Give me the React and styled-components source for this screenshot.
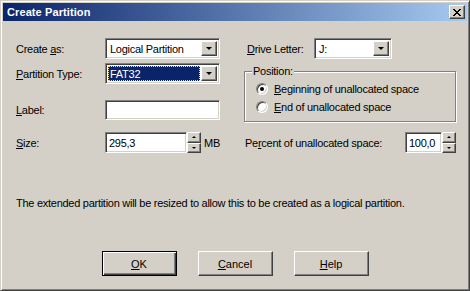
import React from "react";
import styled, { createGlobalStyle, css } from "styled-components";

const GlobalStyle = createGlobalStyle`
  html, body {
    margin: 0;
    padding: 0;
    background: #d4d0c8;
  }
  body {
    font-family: "Liberation Sans", Arial, sans-serif;
    font-size: 11px;
    letter-spacing: -0.27px;
    color: #000;
  }
  * { box-sizing: border-box; }
`;

const raised = css`
  border: 1px solid;
  border-color: #fff #404040 #404040 #fff;
  box-shadow: inset -1px -1px #808080, inset 1px 1px #d4d0c8;
  background: #d4d0c8;
`;

const sunken = css`
  border: 1px solid;
  border-color: #808080 #fff #fff #808080;
  box-shadow: inset 1px 1px #404040, inset -1px -1px #d4d0c8;
`;

const Window = styled.div`
  width: 470px;
  height: 291px;
  background: #d4d0c8;
  border: 1px solid;
  border-color: #d4d0c8 #404040 #404040 #d4d0c8;
  box-shadow: inset 1px 1px #fff, inset -1px -1px #808080;
  padding: 2px;
  display: flex;
  flex-direction: column;
`;

const TitleBar = styled.div`
  height: 18px;
  display: flex;
  align-items: center;
  justify-content: space-between;
  padding: 0 2px;
  background: linear-gradient(to right, #0a246a, #a6caf0);
`;

const Title = styled.span`
  color: #fff;
  font-weight: bold;
  font-size: 11px;
  letter-spacing: 0.1px;
  padding-left: 2px;
`;

const CloseButton = styled.button`
  ${raised};
  width: 16px;
  height: 14px;
  padding: 0;
  display: flex;
  align-items: center;
  justify-content: center;
`;

const Body = styled.div`
  flex: 1;
  padding: 17px 0 0 13px;
  display: flex;
  flex-direction: column;
`;

const Columns = styled.div`
  display: grid;
  grid-template-columns: 228px 212px;
  align-items: start;
`;

const Column = styled.div`
  display: flex;
  flex-direction: column;
`;

const Row = styled.div`
  display: flex;
  align-items: center;
  height: ${p => p.h || 21}px;
  margin-top: ${p => p.mt || 0}px;
  padding-left: ${p => p.pl || 0}px;
`;

const FieldLabel = styled.span`
  width: ${p => p.w}px;
  flex-shrink: 0;
  white-space: nowrap;
`;

const Combo = styled.div`
  ${sunken};
  width: ${p => p.w}px;
  height: 21px;
  background: #fff;
  display: flex;
  align-items: stretch;
  padding: 2px;
`;

const ComboValue = styled.div`
  flex: 1;
  display: flex;
  align-items: center;
  padding-left: 2px;
  margin-right: 1px;
  ${p =>
    p.selected &&
    css`
      background: #0a246a;
      color: #fff;
      outline: 1px dotted #f5db95;
      outline-offset: -1px;
    `}
`;

const DropButton = styled.div`
  ${raised};
  width: 16px;
  display: flex;
  align-items: center;
  justify-content: center;
`;

const Arrow = styled.span`
  width: 0;
  height: 0;
  border-left: ${p => p.s}px solid transparent;
  border-right: ${p => p.s}px solid transparent;
  ${p =>
    p.up
      ? css`border-bottom: ${p.s}px solid #000;`
      : css`border-top: ${p.s}px solid #000;`}
`;

const TextBox = styled.div`
  ${sunken};
  width: ${p => p.w}px;
  height: ${p => p.h || 21}px;
  background: #fff;
  display: flex;
  align-items: center;
  padding-left: 3px;
`;

const Spinner = styled.div`
  width: 14px;
  height: 21px;
  display: flex;
  flex-direction: column;
`;

const SpinButton = styled.div`
  ${raised};
  flex: 1;
  display: flex;
  align-items: center;
  justify-content: center;
`;

const Unit = styled.span`
  margin-left: 3px;
`;

const GroupBox = styled.fieldset`
  margin: 6px 0 0 0;
  padding: 2px 0 5px 11px;
  min-width: 0;
  width: 212px;
  border: 1px solid #808080;
  box-shadow: inset 1px 1px #fff, 1px 1px #fff;
`;

const Legend = styled.legend`
  padding: 0 1px;
  margin-left: -4px;
  line-height: 13px;
  background: #d4d0c8;
`;

const RadioRow = styled.label`
  display: flex;
  align-items: center;
  height: 18px;
`;

const RadioDot = styled.span`
  width: 12px;
  height: 12px;
  border-radius: 50%;
  border: 1px solid;
  border-color: #808080 #fff #fff #808080;
  box-shadow: inset 1px 1px #404040, inset -1px -1px #d4d0c8;
  background: #fff;
  margin-right: 6px;
  display: flex;
  align-items: center;
  justify-content: center;
  &::after {
    content: "";
    width: 4px;
    height: 4px;
    border-radius: 50%;
    background: ${p => (p.checked ? "#000" : "transparent")};
  }
`;

const Note = styled.p`
  margin: 44px 0 0 0;
  line-height: 13px;
`;

const ButtonBar = styled.div`
  margin: 41px 13px 0 0;
  display: flex;
  justify-content: center;
  gap: 21px;
`;

const PushButton = styled.button`
  width: 75px;
  height: 25px;
  font: inherit;
  color: #000;
  padding: 0;
  ${raised};
  ${p =>
    p.primary &&
    css`
      border: 1px solid #000;
      box-shadow: inset 1px 1px #fff, inset -1px -1px #404040,
        inset -2px -2px #808080;
    `}
`;

const CloseGlyph = () => {
  const rows = ["11000011", "01100110", "00111100", "00011000", "00111100", "01100110", "11000011"];
  return (
    <svg width="8" height="7" viewBox="0 0 8 7" shapeRendering="crispEdges">
      {rows.map((r, y) =>
        r.split("").map((c, x) => (c === "1" ? <rect key={`${x}-${y}`} x={x} y={y} width="1" height="1" fill="#000" /> : null))
      )}
    </svg>
  );
};

const DropDown = ({ w, value, selected }) => (
  <Combo w={w}>
    <ComboValue selected={selected}>{value}</ComboValue>
    <DropButton>
      <Arrow s={3.5} />
    </DropButton>
  </Combo>
);

const SpinBox = () => (
  <Spinner>
    <SpinButton>
      <Arrow up s={2} />
    </SpinButton>
    <SpinButton>
      <Arrow s={2} />
    </SpinButton>
  </Spinner>
);

export default function App() {
  return (
    <>
      <GlobalStyle />
      <Window>
        <TitleBar>
          <Title>Create Partition</Title>
          <CloseButton aria-label="Close">
            <CloseGlyph />
          </CloseButton>
        </TitleBar>
        <Body>
          <Columns>
            <Column>
              <Row>
                <FieldLabel w={89}>
                  Create <u>a</u>s:
                </FieldLabel>
                <DropDown w={115} value="Logical Partition" />
              </Row>
              <Row mt={4}>
                <FieldLabel w={89}>
                  <u>P</u>artition Type:
                </FieldLabel>
                <DropDown w={115} value="FAT32" selected />
              </Row>
              <Row mt={16} h={20}>
                <FieldLabel w={89}>
                  <u>L</u>abel:
                </FieldLabel>
                <TextBox w={115} h={20} />
              </Row>
              <Row mt={12}>
                <FieldLabel w={89}>
                  <u>S</u>ize:
                </FieldLabel>
                <TextBox w={82}>295,3</TextBox>
                <SpinBox />
                <Unit>MB</Unit>
              </Row>
            </Column>
            <Column>
              <Row pl={3}>
                <FieldLabel w={67}>
                  <u>D</u>rive Letter:
                </FieldLabel>
                <DropDown w={78} value="J:" />
              </Row>
              <GroupBox>
                <Legend>Position:</Legend>
                <RadioRow>
                  <RadioDot checked />
                  <span>
                    <u>B</u>eginning of unallocated space
                  </span>
                </RadioRow>
                <RadioRow>
                  <RadioDot />
                  <span>
                    <u>E</u>nd of unallocated space
                  </span>
                </RadioRow>
              </GroupBox>
              <Row mt={10} pl={1}>
                <FieldLabel w={160}>
                  Pe<u>r</u>cent of unallocated space:
                </FieldLabel>
                <TextBox w={37}>100,0</TextBox>
                <SpinBox />
              </Row>
            </Column>
          </Columns>
          <Note>The extended partition will be resized to allow this to be created as a logical partition.</Note>
          <ButtonBar>
            <PushButton primary>
              <u>O</u>K
            </PushButton>
            <PushButton>
              <u>C</u>ancel
            </PushButton>
            <PushButton>
              <u>H</u>elp
            </PushButton>
          </ButtonBar>
        </Body>
      </Window>
    </>
  );
}
